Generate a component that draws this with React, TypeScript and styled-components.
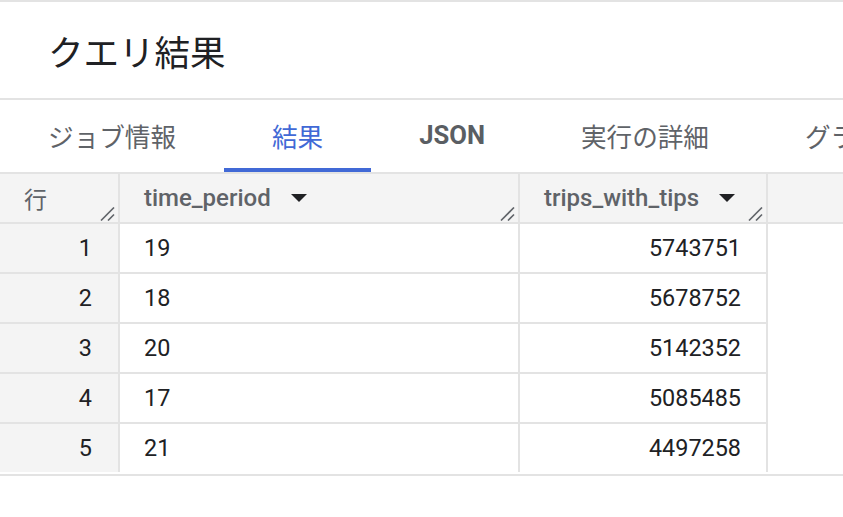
import React from "react";
import styled, { createGlobalStyle } from "styled-components";

const Global = createGlobalStyle`
  html, body { margin: 0; padding: 0; background: #ffffff; }
  body { font-family: Roboto, "Noto Sans CJK JP", sans-serif; color: #202124; }
`;

const Page = styled.div`
  width: 843px;
  overflow: hidden;
  border-top: 2px solid #e3e3e3;
`;

const TitleBar = styled.div`
  height: 96px;
  display: flex;
  align-items: center;
  padding-left: 48px;
  border-bottom: 2px solid #e3e3e3;
`;

const Title = styled.h1`
  margin: 0;
  font-family: "Noto Sans CJK JP", sans-serif;
  font-weight: 400;
  font-size: 35.5px;
  color: #202124;
`;

const TabBar = styled.div`
  display: flex;
  height: 72px;
  white-space: nowrap;
  overflow: hidden;
`;

const Tab = styled.div<{ $active?: boolean; $bold?: boolean }>`
  flex: none;
  display: flex;
  align-items: center;
  padding: 0 48px;
  box-sizing: border-box;
  height: 72px;
  font-family: ${(p) => (p.$bold ? "Roboto, sans-serif" : "Roboto, \"Noto Sans CJK JP\", sans-serif")};
  font-size: 25.6px;
  font-weight: ${(p) => (p.$bold ? 700 : 400)};
  color: ${(p) => (p.$active ? "#4169d6" : p.$bold ? "#5a5e63" : "#5f6368")};
  border-bottom: 4px solid ${(p) => (p.$active ? "#4169d6" : "transparent")};
  padding-top: 2px;
`;

const Table = styled.div`
  border-top: 2px solid #e3e3e3;
  border-bottom: 2px solid #e3e3e3;
`;

const Grid = styled.div`
  display: grid;
  grid-template-columns: 120px 400px 248px 1fr;
`;

const HeadCell = styled.div<{ $last?: boolean }>`
  position: relative;
  height: 48px;
  display: flex;
  align-items: center;
  padding-left: 24px;
  background: #f4f4f4;
  border-bottom: 2px solid #e3e3e3;
  border-right: ${(p) => (p.$last ? "none" : "2px solid #e3e3e3")};
  font-size: 24px;
  font-weight: 500;
  color: #5f6368;
  font-family: Roboto, "Noto Sans CJK JP", sans-serif;
`;

const RowHeadLabel = styled.span`
  font-weight: 400;
  font-size: 23px;
  font-family: "Noto Sans CJK JP", sans-serif;
`;

const SortArrow = styled.svg`
  margin-left: 20px;
  flex: none;
`;

const Handle = styled.svg`
  position: absolute;
  right: 3px;
  bottom: 1px;
`;

const NumCell = styled.div<{ $last?: boolean }>`
  height: 48px;
  display: flex;
  align-items: center;
  justify-content: flex-end;
  padding-right: 26px;
  background: #f4f4f4;
  border-right: 2px solid #e3e3e3;
  border-bottom: ${(p) => (p.$last ? "none" : "2px solid #e3e3e3")};
  font-size: 23.4px;
  color: #202124;
`;

const DataCell = styled.div<{ $right?: boolean; $last?: boolean }>`
  height: 48px;
  display: flex;
  align-items: center;
  justify-content: ${(p) => (p.$right ? "flex-end" : "flex-start")};
  padding: ${(p) => (p.$right ? "0 25px 0 0" : "0 0 0 24px")};
  border-right: 2px solid #e3e3e3;
  border-bottom: ${(p) => (p.$last ? "none" : "2px solid #e3e3e3")};
  font-size: 23.4px;
  color: #202124;
`;

const Filler = styled.div`
  height: 48px;
  border-bottom: 2px solid transparent;
  background: #ffffff;
`;

const ResizeHandle = () => (
  <Handle width="15" height="14" viewBox="0 0 15 14">
    <line x1="1" y1="13.5" x2="14" y2="0.5" stroke="#5f6368" strokeWidth="1.6" />
    <line x1="8" y1="13.5" x2="14" y2="7.5" stroke="#5f6368" strokeWidth="1.6" />
  </Handle>
);

const Arrow = () => (
  <SortArrow width="16" height="8" viewBox="0 0 16 8">
    <polygon points="0,0 16,0 8,8" fill="#202124" />
  </SortArrow>
);

const rows = [
  { n: 1, t: "19", v: "5743751" },
  { n: 2, t: "18", v: "5678752" },
  { n: 3, t: "20", v: "5142352" },
  { n: 4, t: "17", v: "5085485" },
  { n: 5, t: "21", v: "4497258" },
];

export default function App() {
  return (
    <>
      <Global />
      <Page>
        <TitleBar>
          <Title>クエリ結果</Title>
        </TitleBar>
        <TabBar>
          <Tab>ジョブ情報</Tab>
          <Tab $active>結果</Tab>
          <Tab $bold>JSON</Tab>
          <Tab>実行の詳細</Tab>
          <Tab>グラフ</Tab>
        </TabBar>
        <Table>
          <Grid>
            <HeadCell>
              <RowHeadLabel>行</RowHeadLabel>
              <ResizeHandle />
            </HeadCell>
            <HeadCell>
              time_period
              <Arrow />
              <ResizeHandle />
            </HeadCell>
            <HeadCell>
              trips_with_tips
              <Arrow />
              <ResizeHandle />
            </HeadCell>
            <HeadCell $last />
            {rows.map((r, i) => {
              const last = i === rows.length - 1;
              return (
                <React.Fragment key={r.n}>
                  <NumCell $last={last}>{r.n}</NumCell>
                  <DataCell $last={last}>{r.t}</DataCell>
                  <DataCell $right $last={last}>{r.v}</DataCell>
                  <Filler />
                </React.Fragment>
              );
            })}
          </Grid>
        </Table>
      </Page>
    </>
  );
}
